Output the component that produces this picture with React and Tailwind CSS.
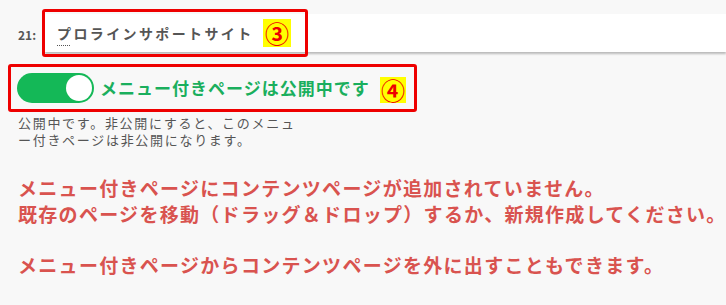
import React from "react";

export default function App() {
  const jp = { fontFamily: '"Noto Sans CJK JP", "Noto Sans", sans-serif' };
  return (
    <div className="w-[726px] h-[305px] bg-[#f8f8f8] overflow-hidden relative" style={jp}>
      {/* Row 21 */}
      <div className="flex items-center pt-[14px] h-[52px]">
        <div className="w-[45px] pl-[18px] text-[12px] font-bold text-[#555] pt-[3px]">21:</div>
        <div className="flex-1 h-[38px] bg-white shadow-[0_2px_2px_rgba(0,0,0,0.25)] flex items-center pl-[12px]">
          <span className="relative text-[14px] font-bold text-[#555] tracking-[0.17em]">
            プロラインサポートサイト
            <span className="absolute left-0 top-[22px] w-[13px] border-b border-dotted border-[#555]"></span>
          </span>
        </div>
      </div>
      {/* Red box 3 */}
      <div className="absolute left-[42px] top-[9px] w-[266px] h-[48px] border-[3px] border-[#ee0000] rounded-[3px]"></div>
      <div className="absolute left-[263px] top-[19px] w-[28px] h-[28px] bg-[#ffff00] flex items-center justify-center text-[#ee0000] text-[24px] font-bold leading-none">③</div>

      {/* Toggle row */}
      <div className="relative mt-[12px] ml-[8px] w-[409px] h-[48px] border-[3px] border-[#ee0000] rounded-[3px] flex items-center pl-[6px]">
        <div className="w-[77px] h-[30px] rounded-full bg-[#14b857] flex items-center justify-end pr-[2px]">
          <div className="w-[26px] h-[26px] rounded-full bg-white"></div>
        </div>
        <span className="ml-[6px] text-[17px] font-bold text-[#1aaf5d] tracking-[1px]">メニュー付きページは公開中です</span>
        <div className="absolute left-[369px] top-[10px] w-[26px] h-[26px] bg-[#ffff00] flex items-center justify-center text-[#ee0000] text-[24px] font-bold leading-none">④</div>
      </div>

      <p className="ml-[18px] mt-[2px] w-[286px] text-[13px] leading-[17px] text-[#555] tracking-[1.7px]">
        公開中です。非公開にすると、このメニュー付きページは非公開になります。
      </p>

      <div className="ml-[18px] mt-[27px] text-[19px] leading-[26px] font-bold text-[#d9534f] tracking-[1.3px] whitespace-nowrap">
        <p>メニュー付きページにコンテンツページが追加されていません。</p>
        <p>既存のページを移動（ドラッグ＆ドロップ）するか、新規作成してください。</p>
        <p className="mt-[25px]">メニュー付きページからコンテンツページを外に出すこともできます。</p>
      </div>
    </div>
  );
}
